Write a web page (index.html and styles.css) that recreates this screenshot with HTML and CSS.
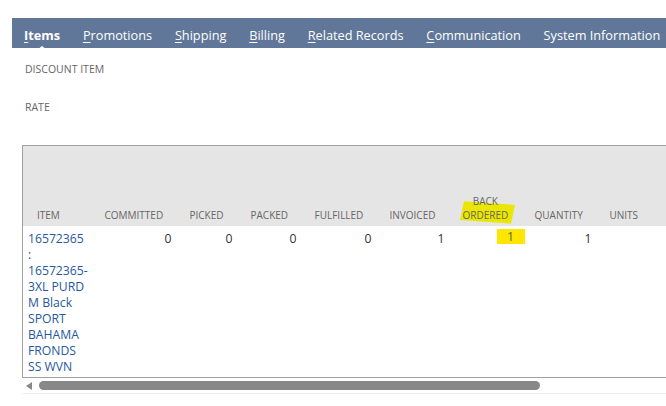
FILE: index.html
```html
<!DOCTYPE html>
<html lang="en">
<head>
  <meta charset="UTF-8">
  <title>Sales Order - Items</title>
  <link rel="stylesheet" href="styles.css">
</head>
<body>

  <div class="tabs">
    <a class="tab tab-on"><u>I</u>tems</a>
    <a class="tab"><u>P</u>romotions</a>
    <a class="tab"><u>S</u>hipping</a>
    <a class="tab"><u>B</u>illing</a>
    <a class="tab"><u>R</u>elated Records</a>
    <a class="tab"><u>C</u>ommunication</a>
    <a class="tab">System Information</a>
  </div>

  <div class="fields">
    <div class="field-label">DISCOUNT ITEM</div>
    <div class="field-label">RATE</div>
  </div>

  <div class="machine">
    <table class="lines">
      <colgroup>
        <col style="width:70px">
        <col style="width:85px">
        <col style="width:61px">
        <col style="width:64px">
        <col style="width:75px">
        <col style="width:73px">
        <col style="width:72px">
        <col style="width:75px">
        <col style="width:80px">
      </colgroup>
      <thead>
        <tr>
          <th class="col-item">ITEM</th>
          <th>COMMITTED</th>
          <th>PICKED</th>
          <th>PACKED</th>
          <th>FULFILLED</th>
          <th>INVOICED</th>
          <th><span class="mark mark-head"></span><span class="two">BACK<br>ORDERED</span></th>
          <th>QUANTITY</th>
          <th>UNITS</th>
        </tr>
      </thead>
      <tbody>
        <tr>
          <td class="col-item"><a class="item-link">16572365<br>:<br>16572365-<br>3XL PURD<br>M Black<br>SPORT<br>BAHAMA<br>FRONDS<br>SS WVN</a></td>
          <td class="num">0</td>
          <td class="num">0</td>
          <td class="num">0</td>
          <td class="num">0</td>
          <td class="num">1</td>
          <td class="num"><span class="mark-cell">1</span></td>
          <td class="num">1</td>
          <td></td>
        </tr>
      </tbody>
    </table>
    <div class="hscroll">
      <span class="arrow"></span>
      <span class="thumb"></span>
    </div>
  </div>

</body>
</html>
```

FILE: styles.css
```css
body{
  margin:0;
  font-family:"Open Sans","Noto Sans",sans-serif;
  color:#333;
  background:#fff;
}

/* tab strip */
.tabs{
  margin:18px 0 0 12px;
  height:30px;
  background:#607799;
  display:flex;
  align-items:center;
  gap:22.8px;
  padding-left:12px;
  white-space:nowrap;
  overflow:hidden;
}
.tab{
  color:#fff;
  font-size:12.72px;
  position:relative;
  line-height:30px;
  padding-top:3px;
}
.tab u{
  text-decoration:underline;
  text-underline-offset:2px;
}
.tab-on{
  font-weight:700;
}
.tab-on:after{
  content:'';
  position:absolute;
  left:50%;
  bottom:0;
  margin-left:-5px;
  border-left:5px solid transparent;
  border-right:5px solid transparent;
  border-bottom:4px solid #fff;
}

/* field labels */
.fields{
  padding:15px 0 0 25px;
}
.field-label{
  font-size:10.5px;
  color:#666;
  height:38px;
  line-height:12px;
}

/* item sublist */
.machine{
  margin:6px 0 0 22px;
  width:700px;
}
.lines{
  border-collapse:collapse;
  table-layout:fixed;
  width:655px;
  border-top:1px solid #a0a0a0;
  border-left:1px solid #a0a0a0;
  border-bottom:1px solid #a0a0a0;
}
.lines th{
  background:#e5e5e5;
  height:76px;
  vertical-align:bottom;
  text-align:left;
  font-weight:400;
  font-size:10px;
  color:#666;
  padding:0 0 4px 12px;
  line-height:14px;
  position:relative;
}
.lines th.col-item{
  padding-left:14px;
}
.lines td{
  vertical-align:top;
  font-size:12.2px;
  line-height:16px;
  padding:5px 6px 2px 6px;
}
.lines td.col-item{
  padding-left:5px;
}
.lines td.num{
  text-align:right;
}
.item-link{
  color:#25589c;
}
.two{
  display:inline-block;
  text-align:center;
  position:relative;
}

/* yellow marker */
.mark-head{
  position:absolute;
  left:11px;
  bottom:4px;
  width:51px;
  height:19px;
  background:#ebe600;
  transform:rotate(4deg) skewX(-8deg);
}
.mark-cell{
  display:inline-block;
  background:#ffe600;
  width:28px;
  height:15px;
  text-align:center;
  margin-right:-8px;
  position:relative;
  top:-2px;
  color:#4a6a2a;
}

/* horizontal scrollbar */
.hscroll{
  height:15px;
  display:flex;
  align-items:center;
  gap:7px;
  padding-left:4px;
  border-bottom:1px solid #eee;
}
.arrow{
  border-top:4px solid transparent;
  border-bottom:4px solid transparent;
  border-right:6px solid #888;
}
.thumb{
  width:501px;
  height:9px;
  border-radius:5px;
  background:#888;
}
```
